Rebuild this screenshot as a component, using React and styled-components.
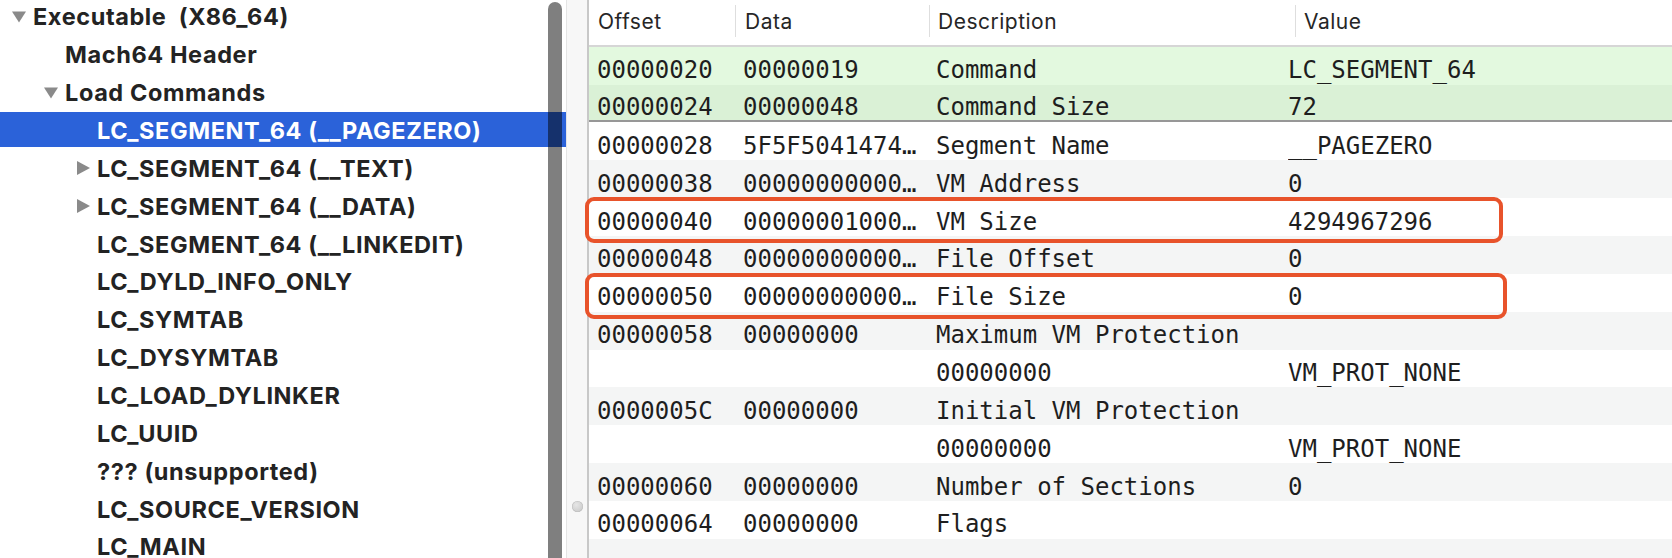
import React from 'react';
import styled, { createGlobalStyle } from 'styled-components';

const GlobalStyle = createGlobalStyle`
  html, body {
    margin: 0;
    padding: 0;
    background: #fff;
    overflow: hidden;
  }
  body {
    font-family: Inter, "Liberation Sans", sans-serif;
  }
`

const ROW = 37.86

const Window = styled.div`
  display: flex;
  width: 1672px;
  height: 558px;
  overflow: hidden;
  background: #fff;
`

// ---- left outline ----
const Sidebar = styled.div`
  position: relative;
  flex: none;
  width: 566px;
  overflow: hidden;
`

const Tree = styled.ul`
  list-style: none;
  margin: -3px 0 0;
  padding: 0;
`

const TreeRow = styled.li`
  display: flex;
  align-items: center;
  box-sizing: border-box;
  height: ${ROW}px;
  padding: 2px 0 0 ${p => 33 + p.$level * 32}px;
  border-top: 1px solid transparent;
  border-bottom: 1px solid transparent;
  background: ${p => (p.$selected ? '#2b62d9' : 'transparent')};
  background-clip: padding-box;
  color: ${p => (p.$selected ? '#fff' : '#232323')};
  font: 700 23.5px Inter, "Liberation Sans", sans-serif;
  letter-spacing: 0.6px;
  white-space: pre;
`

const Disclosure = styled.span`
  display: flex;
  align-items: center;
  justify-content: flex-end;
  width: 21px;
  margin-left: -21px;
  padding-right: 7px;
  box-sizing: border-box;
`

const ScrollThumb = styled.div`
  position: absolute;
  left: 548px;
  top: 2px;
  bottom: -20px;
  width: 14px;
  border-radius: 7px;
  background: rgba(0, 0, 0, 0.5);
`

const Splitter = styled.div`
  flex: none;
  width: 23px;
  display: flex;
  flex-direction: column;
  align-items: center;
  justify-content: flex-end;
  padding-bottom: 46px;
  box-sizing: border-box;
  background: #f7f7f7;
  border-left: 1px solid #e4e4e4;
  border-right: 2px solid #c8c8c8;
`

const Dimple = styled.span`
  width: 11px;
  height: 11px;
  border-radius: 50%;
  background: radial-gradient(circle at 40% 35%, #e6e6e6, #c4c4c4);
  box-shadow: inset 0 0 0 0.5px #bdbdbd;
`

// ---- right table ----
const Table = styled.div`
  position: relative;
  flex: 1;
  display: flex;
  flex-direction: column;
`

const columns = '146px 194px 366px 1fr'

const Header = styled.div`
  flex: none;
  display: grid;
  grid-template-columns: ${columns};
  box-sizing: border-box;
  height: 46.7px;
  border-bottom: 2px solid #d6d6d6;
`

const HeaderCell = styled.div`
  display: flex;
  align-items: center;
  align-self: start;
  height: 32px;
  margin-top: 5px;
  padding-left: ${p => p.$pad}px;
  border-left: ${p => (p.$first ? 'none' : '1px solid #dedede')};
  color: #262626;
  font: 400 21px Inter, "Liberation Sans", sans-serif;
  letter-spacing: 0.5px;
`

const rowBg = {
  greenA: '#e3f9df',
  greenB: '#daf1d6',
  white: '#ffffff',
  gray: '#f4f5f5',
}

const Row = styled.div`
  position: relative;
  display: grid;
  grid-template-columns: ${columns};
  align-items: center;
  flex: none;
  box-sizing: border-box;
  height: ${ROW}px;
  padding-top: 9px;
  background: ${p => rowBg[p.$tone]};
  border-bottom: ${p => (p.$divider ? '2px solid #979797' : 'none')};
  color: #1e1e1e;
  font: 400 24px "DejaVu Sans Mono", "Liberation Mono", monospace;
  white-space: nowrap;
`

const Cell = styled.span`
  margin-left: ${p => p.$shift}px;
  overflow: hidden;
`

const Callout = styled.div`
  position: absolute;
  z-index: 2;
  left: -4px;
  top: -1px;
  width: ${p => p.$width}px;
  height: 46px;
  box-sizing: border-box;
  border: 4px solid #e8532b;
  border-radius: 9px;
  pointer-events: none;
`

const Triangle = ({ open }) => (
  open ? (
    <svg width="15" height="12" viewBox="0 0 15 12">
      <path d="M0 0 H15 L7.5 12 Z" fill="#8a8a8a" />
    </svg>
  ) : (
    <svg width="13" height="14" viewBox="0 0 13 14">
      <path d="M0 0 L13 7 L0 14 Z" fill="#8a8a8a" />
    </svg>
  )
)

const treeItems = [
  { label: 'Executable  (X86_64)', level: 0, toggle: 'open' },
  { label: 'Mach64 Header', level: 1 },
  { label: 'Load Commands', level: 1, toggle: 'open' },
  { label: 'LC_SEGMENT_64 (__PAGEZERO)', level: 2, selected: true },
  { label: 'LC_SEGMENT_64 (__TEXT)', level: 2, toggle: 'closed' },
  { label: 'LC_SEGMENT_64 (__DATA)', level: 2, toggle: 'closed' },
  { label: 'LC_SEGMENT_64 (__LINKEDIT)', level: 2 },
  { label: 'LC_DYLD_INFO_ONLY', level: 2 },
  { label: 'LC_SYMTAB', level: 2 },
  { label: 'LC_DYSYMTAB', level: 2 },
  { label: 'LC_LOAD_DYLINKER', level: 2 },
  { label: 'LC_UUID', level: 2 },
  { label: '??? (unsupported)', level: 2 },
  { label: 'LC_SOURCE_VERSION', level: 2 },
  { label: 'LC_MAIN', level: 2 },
]

const headers = [
  { label: 'Offset', pad: 9 },
  { label: 'Data', pad: 9 },
  { label: 'Description', pad: 8 },
  { label: 'Value', pad: 8 },
]

// value column text sits a little left of its header divider
const cellShifts = [8, 8, 7, -7]

const rows = [
  ['00000020', '00000019', 'Command', 'LC_SEGMENT_64'],
  ['00000024', '00000048', 'Command Size', '72'],
  ['00000028', '5F5F5041474…', 'Segment Name', '__PAGEZERO'],
  ['00000038', '00000000000…', 'VM Address', '0'],
  ['00000040', '00000001000…', 'VM Size', '4294967296', 918],
  ['00000048', '00000000000…', 'File Offset', '0'],
  ['00000050', '00000000000…', 'File Size', '0', 922],
  ['00000058', '00000000', 'Maximum VM Protection', ''],
  ['', '', '00000000', 'VM_PROT_NONE'],
  ['0000005C', '00000000', 'Initial VM Protection', ''],
  ['', '', '00000000', 'VM_PROT_NONE'],
  ['00000060', '00000000', 'Number of Sections', '0'],
  ['00000064', '00000000', 'Flags', ''],
  ['', '', '', ''],
]

const toneFor = i => {
  if (i === 0) return 'greenA'
  if (i === 1) return 'greenB'
  return i % 2 === 0 ? 'white' : 'gray'
}

const App = () => {
  return (
    <>
      <GlobalStyle />
      <Window>
        <Sidebar>
          <Tree>
            {treeItems.map(item => (
              <TreeRow key={item.label} $level={item.level} $selected={item.selected}>
                {item.toggle && (
                  <Disclosure>
                    <Triangle open={item.toggle === 'open'} />
                  </Disclosure>
                )}
                {item.label}
              </TreeRow>
            ))}
          </Tree>
          <ScrollThumb />
        </Sidebar>

        <Splitter>
          <Dimple />
        </Splitter>

        <Table>
          <Header>
            {headers.map((h, i) => (
              <HeaderCell key={h.label} $first={i === 0} $pad={h.pad}>{h.label}</HeaderCell>
            ))}
          </Header>
          {rows.map(([offset, data, desc, value, callout], i) => (
            <Row key={i} $tone={toneFor(i)} $divider={i === 1}>
              {[offset, data, desc, value].map((text, c) => (
                <Cell key={c} $shift={cellShifts[c]}>{text}</Cell>
              ))}
              {callout && <Callout $width={callout} />}
            </Row>
          ))}
        </Table>
      </Window>
    </>
  );
}

export default App;
